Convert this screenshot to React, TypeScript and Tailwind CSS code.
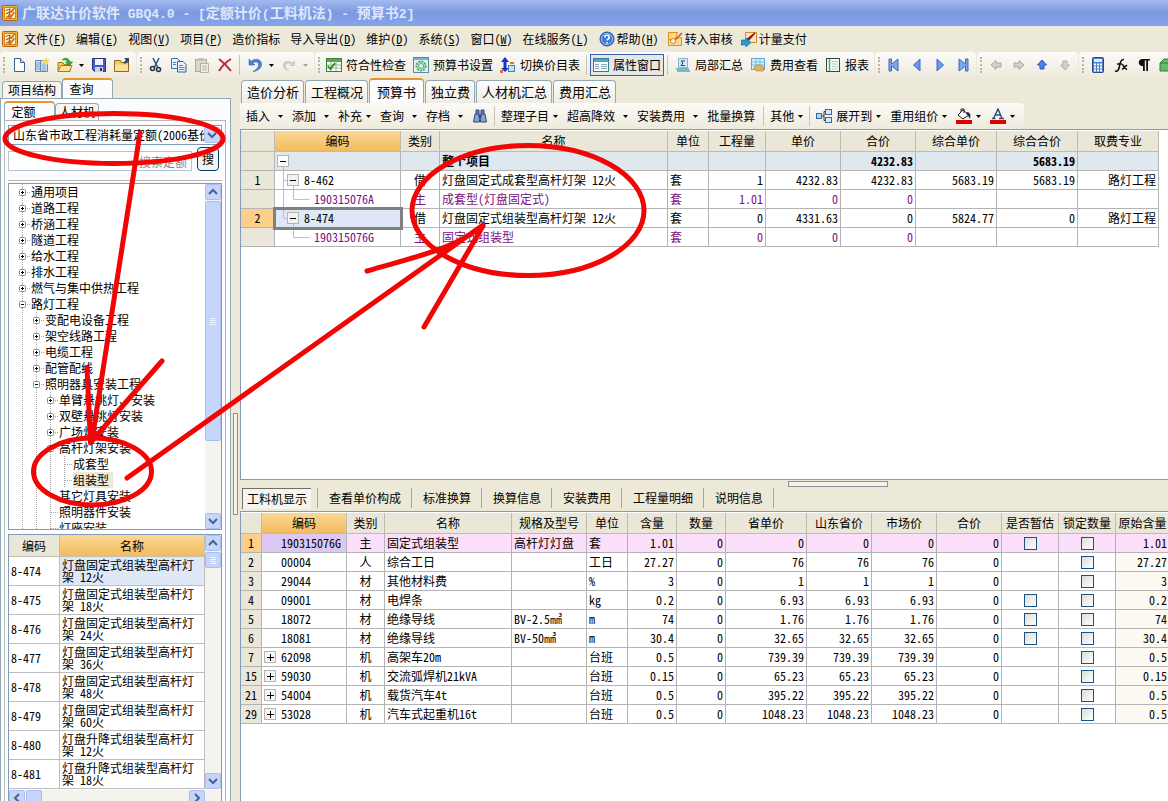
import { ReactNode } from "react";
import clsx from "clsx";

const icons: Record<string, ReactNode> = {
  app: (
    <>
      <rect x="0.5" y="0.5" width="15" height="15" rx="1" fill="#f3b33a" stroke="#b5650f" />
      <rect x="2.5" y="2.5" width="11" height="11" fill="#fff3cf" stroke="#d98618" />
      <path d="M3.500 5.500L8 4M4 9l4-2.500M4 12.500l5-3M8 3.500L7 13M12.500 3L9 7l3 1-4 5" fill="none" stroke="#b8600c" strokeWidth="1.300" />
      <path d="M12 4.500l-2.500 3L12 8" fill="#f0b040" />
    </>
  ),
  newFile: (
    <>
      <path d="M3.500 1.500h6l4 4v9h-10z" fill="#fafcff" stroke="#40608c" />
      <path d="M9.500 1.500v4h4" fill="#c9daf2" stroke="#40608c" />
    </>
  ),
  project: (
    <>
      <path d="M1.500 3.500h5v11h-5zM6.500 3.500h7v11h-7z" fill="#cfe2f8" stroke="#5f86b5" />
      <path d="M3 5v8M5 5v8M8 7h4M8 9h4M8 11h4M8 13h4" stroke="#7ba2cf" />
      <path d="M12 0l1 2.500L16 3l-2 2 .5 3L12 6.500 9.500 8l.5-3-2-2 3-.5z" fill="#f8d65a" />
    </>
  ),
  open: (
    <>
      <path d="M1 5.500h5l1 2h6v7H1z" fill="#f5c95a" stroke="#a9781c" />
      <path d="M1 14.500l3-6h11l-2.500 6z" fill="#fde39a" stroke="#a9781c" />
      <path d="M5 3c3-3 7-2 8 2h2.500L12 9 8.500 5H11C10 3 8 2.500 5 3z" fill="#35b02d" stroke="#1d7a1a" strokeWidth="0.600" />
    </>
  ),
  save: (
    <>
      <path d="M1.500 1.500h13v13h-11l-2-2z" fill="#4a5cc0" stroke="#28327c" />
      <rect x="4" y="2" width="8" height="6" fill="#eef2fc" />
      <rect x="4" y="10" width="8" height="5" fill="#c9d2ea" />
      <rect x="9" y="11" width="2" height="3" fill="#28327c" />
    </>
  ),
  folder: (
    <>
      <path d="M0.500 3.500h6l1 2h7v9h-14z" fill="#f1c760" stroke="#8d6b20" />
      <path d="M1 7.500h13v6.500H1z" fill="#fbe09a" />
      <path d="M10 1h5v5l-1.500-1.500L11 7 9.500 5.500 12 3z" fill="#38425f" />
    </>
  ),
  cut: (
    <>
      <path d="M5 1l4.500 9M11 1L6.500 10" stroke="#33558a" strokeWidth="1.600" fill="none" />
      <circle cx="4.500" cy="11.500" r="2" fill="none" stroke="#1f2c52" strokeWidth="1.500" />
      <circle cx="10.500" cy="12.500" r="2" fill="none" stroke="#1f2c52" strokeWidth="1.500" />
    </>
  ),
  copy: (
    <>
      <path d="M0.500 1.500h6l3 3v7h-9z" fill="#eaf3fd" stroke="#3c71ad" />
      <path d="M6.500 4.500h5.500l3 3v7.500H6.500z" fill="#eaf3fd" stroke="#2b5f9f" />
      <path d="M8 8.500h4M8 10.500h5.500M8 12.500h5.500M2 5.500h3M2 7.500h3" stroke="#4b86c7" />
    </>
  ),
  paste: (
    <>
      <rect x="1.500" y="2.500" width="11" height="12" fill="#d9d6cb" stroke="#aeaa9d" />
      <rect x="4.500" y="1" width="5" height="3" fill="#c5c1b4" />
      <path d="M6.500 6.500h8v9h-8z" fill="#efeee8" stroke="#b5b1a4" />
      <path d="M8 9h5M8 11h5M8 13h5" stroke="#bdb9ad" />
    </>
  ),
  remove: <path d="M2 2c4 3 8 7 12 12M14 2C9 5 5 9 2 14" stroke="#c1253a" strokeWidth="2" fill="none" />,
  undo: <path d="M2 2v6h6L5.800 6C9 4 12 5 11.500 8.500 11 11 9 13 6 14.500 12 14 15 10 14.500 6.500 14 2 8 1 4.200 4.200z" fill="#4a80d6" stroke="#2c5cab" strokeWidth="0.500" />,
  redo: <path d="M14 3v6H8l2.200-2C7 5.500 4.500 7 5 9.500c.3 2 2 3.500 4 4.500-5 0-7.500-3-7-6.500.5-4 6-4.500 9.500-2z" fill="#d0cdc2" />,
  check: (
    <>
      <rect x="0.500" y="1.500" width="15" height="13" fill="#fff" stroke="#3f7d3a" />
      <path d="M1 2h14v3H1z" fill="#58a948" />
      <path d="M1 8h14M1 11h14M5 5v9M10 5v9" stroke="#8fb78a" />
      <path d="M2 9l2.500 3L9 6" stroke="#238a1e" strokeWidth="1.800" fill="none" />
    </>
  ),
  settings: (
    <>
      <rect x="0.500" y="0.500" width="15" height="15" fill="#e3f1f3" stroke="#568aa3" />
      <path d="M1 1h14v2H1z" fill="#7cb3d4" />
      <circle cx="8" cy="9" r="4.500" fill="none" stroke="#4ba563" strokeWidth="2" strokeDasharray="2 1" />
      <circle cx="8" cy="9" r="2.500" fill="none" stroke="#4ba563" />
    </>
  ),
  swap: (
    <>
      <path d="M5 0l4 5H6.500v6H9l-4 4-4-4h2.500V5H1z" fill="#1432d6" />
      <rect x="8.500" y="8.500" width="6" height="6" fill="#c6e1f5" stroke="#497fb0" />
      <path d="M0 13h3v3H0z" fill="#e36e3c" />
      <path d="M10 6h4" stroke="#e36e3c" strokeWidth="2" />
    </>
  ),
  props: (
    <>
      <rect x="0.500" y="1.500" width="15" height="13" fill="#f3faff" stroke="#3b7c93" />
      <path d="M1 2h14v3H1z" fill="#55a5bd" />
      <path d="M2 7.500h4M2 9.500h4M2 11.500h4M8 7.500h6M8 9.500h6M8 11.500h6" stroke="#8fa9bb" />
    </>
  ),
  sum: (
    <>
      <rect x="3.500" y="1.500" width="9" height="9" fill="#d4ecf8" stroke="#86b6cc" />
      <path d="M10 4H6l2 2-2 2.500h4" stroke="#2a4766" fill="none" />
      <path d="M1 12h13M2 14h13" stroke="#5aa7bf" strokeWidth="1.500" />
    </>
  ),
  fee: (
    <>
      <rect x="1.500" y="1.500" width="13" height="11" fill="#d8effc" stroke="#5fa7d6" />
      <path d="M2 5h12M2 8h12M6 2v10M10 2v10" stroke="#7cbbe0" />
      <path d="M5 9c3-2 8-1 9 2l-1 3H8c-3 0-5-2-3-5z" fill="#e0b25e" stroke="#a87826" strokeWidth="0.600" />
    </>
  ),
  report: (
    <>
      <rect x="1.500" y="1.500" width="13" height="13" fill="#f6fbf6" stroke="#2d4a3a" />
      <path d="M4.500 2v12" stroke="#59a46f" strokeWidth="1.500" />
      <path d="M7 4.500h6M7 7h6M7 9.500h6M7 12h6" stroke="#b6d0bf" />
    </>
  ),
  first: <path d="M3 2h2.500v5L12 2v12L5.500 9v5H3z" fill="#7ea6ef" stroke="#3b69c4" />,
  prev: <path d="M11 2v12L4.500 8z" fill="#6d97ee" stroke="#3b69c4" />,
  next: <path d="M5 2v12l6.500-6z" fill="#6d97ee" stroke="#3b69c4" />,
  last: <path d="M13 2h-2.500v5L4 2v12l6.500-5v5H13z" fill="#7ea6ef" stroke="#3b69c4" />,
  left: <path d="M3 8l5-4.500V6h5v4H8v2.500z" fill="#d2d0ca" stroke="#aaa8a2" />,
  right: <path d="M13 8L8 3.500V6H3v4h5v2.500z" fill="#d2d0ca" stroke="#aaa8a2" />,
  up: <path d="M8 3l4.500 5H10v4H6V8H3.500z" fill="#4a86ee" stroke="#2756b4" />,
  down: <path d="M8 13L3.500 8H6V4h4v4h2.500z" fill="#d2d0ca" stroke="#b2b0aa" />,
  calc: (
    <>
      <rect x="2.500" y="0.500" width="11" height="15" rx="1" fill="#4d7cc9" stroke="#274a8c" />
      <rect x="4" y="2" width="8" height="3" fill="#dcecff" />
      <path d="M4 7.500h8M4 10.500h8M4 13.500h8" stroke="#fff" strokeWidth="2" strokeDasharray="2 1" />
    </>
  ),
  fx: <path d="M2 14c3 1 4-2 4.500-5S8 2 11 2.500M4 7h5M9 8c2-1 2 5 5 4M14 8l-5 4.500" stroke="#111" strokeWidth="1.600" fill="none" />,
  para: <path d="M14 2H6.500C1.500 2 1.500 9 6.500 9H7v5h1.800V3.500h1.400V14H12V3.500h2z" fill="#111" />,
  cube: <path d="M1 6l4-4h10v9l-3 3H1zM1 6h10v8M11 6l4-4" fill="#66b969" stroke="#2f7c39" />,
  binoc: (
    <>
      <path d="M4 2h3v5H4zM9 2h3v5H9z" fill="#5c7fb8" stroke="#2b4679" />
      <path d="M3 6h4l.5 8h-6zM9 6h4l1.500 8h-6z" fill="#86a6d8" stroke="#2b4679" />
      <path d="M7 7h2v3H7z" fill="#2b4679" />
    </>
  ),
  expand: (
    <>
      <path d="M5 8h3M8 3.500v9M8 3.500h2M8 12.500h2" stroke="#333" fill="none" />
      <rect x="0.500" y="5.500" width="5" height="5" fill="#b9d3f5" stroke="#3566a8" />
      <rect x="9.500" y="1.500" width="6" height="5" fill="#dbe9fb" stroke="#3566a8" />
      <rect x="9.500" y="9.500" width="6" height="5" fill="#dbe9fb" stroke="#3566a8" />
    </>
  ),
  fill: (
    <>
      <path d="M2 7l5-5 6 5-6 4z" fill="#fff" stroke="#222" />
      <path d="M5 4V1h3v4" fill="none" stroke="#222" />
      <path d="M11 4c3 0 4 3 3 7-1-2-2-4-4-5z" fill="#20207c" />
      <path d="M0 12h16v4H0z" fill="#e00000" />
    </>
  ),
  fontColor: (
    <>
      <path d="M2 10.500h3.500M9 10.500h5M3.500 10.500L8 1l4 9.500M5.500 7h5" stroke="#2d5080" strokeWidth="1.500" fill="none" />
      <path d="M0 12h16v4H0z" fill="#e00000" />
    </>
  ),
  help: (
    <>
      <circle cx="8" cy="8" r="7" fill="#3b74d6" stroke="#2150a0" />
      <circle cx="8" cy="8" r="5.500" fill="none" stroke="#a8c8f8" />
      <path d="M5.800 6.500c0-3 4.500-3 4.500 0 0 1.500-2.200 1.500-2.200 3M8 11v1.500" stroke="#fff" strokeWidth="1.600" fill="none" />
    </>
  ),
  audit: (
    <>
      <path d="M1.500 1.500h9l-2 6 6-1v8h-13z" fill="#fbd98c" stroke="#e08e1e" />
      <path d="M3 8l3 3 9-9" stroke="#d94f1c" strokeWidth="1.500" fill="none" />
      <circle cx="6" cy="10" r="2.500" fill="#fff3d0" stroke="#cf8b27" />
    </>
  ),
  pay: (
    <>
      <path d="M4.500 1.500h11v10h-11z" fill="#fbe5c4" stroke="#d98332" />
      <path d="M14 2L7 10l-2 1 .5-2.500z" fill="#b5381c" stroke="#7c2410" strokeWidth="1.200" />
      <path d="M0 9h5v-2l5 4.500L5 16v-2H0z" fill="#2e9ac8" stroke="#16688f" strokeWidth="0.600" />
    </>
  ),
};

const Icon = ({ name }: { name: string }) => (
  <svg viewBox="0 0 16 16" className="h-4 w-4 shrink-0" aria-hidden="true">
    {icons[name]}
  </svg>
);

const Caret = ({ className }: { className?: string }) => (
  <svg viewBox="0 0 5 3" className={clsx("h-[3px] w-[5px] shrink-0", className)} aria-hidden="true">
    <path d="M0 0h5L2.500 3z" fill="currentColor" />
  </svg>
);

const Sep = ({ wide }: { wide?: boolean }) => (
  <span className={clsx("h-5 w-px shrink-0 bg-[#c9c5b2]", wide ? "mx-[6px]" : "mx-[3px]")} />
);

const Group = ({ children, className }: { children: ReactNode; className?: string }) => (
  <div
    className={clsx(
      "flex h-[26px] shrink-0 items-center rounded-sm bg-linear-to-b from-[#fbfaf7] to-[#eeebdd] pl-[3px]",
      className
    )}
  >
    <span className="mr-[2px] h-4 w-0.5 shrink-0 border-l-2 border-dotted border-[#b9b5a2]" />
    {children}
  </div>
);

const IconButton = ({ name, label }: { name: string; label: string }) => (
  <button type="button" aria-label={label} className="flex w-[23px] shrink-0 justify-center">
    <Icon name={name} />
  </button>
);

const TextButton = ({ icon, text }: { icon: string; text: string }) => (
  <button type="button" className="flex shrink-0 items-center gap-1 pr-[3px] pl-1">
    <Icon name={icon} />
    {text}
  </button>
);

const TitleBar = () => {
  const title = "广联达计价软件 GBQ4.0 - [定额计价(工料机法) - 预算书2]";
  return (
    <header className="flex h-[26px] shrink-0 items-center gap-1 bg-linear-to-b from-[#a3baf0] via-[#7b98e0] to-[#86a6ea] pl-[2px]">
      <Icon name="app" />
      <h1 className="text-[14px] font-bold whitespace-pre text-[#dfe7fb]">
        {title.split(/([ -~]+)/).map((part, n) => (
          <span key={n} className={clsx(n % 2 === 1 && "font-['Liberation_Mono',monospace] text-[13px]")}>
            {part}
          </span>
        ))}
      </h1>
    </header>
  );
};

const MenuBar = () => {
  const menus = ["文件(F)", "编辑(E)", "视图(V)", "项目(P)", "造价指标", "导入导出(D)", "维护(D)", "系统(S)", "窗口(W)", "在线服务(L)"];
  return (
    <nav className="flex h-[26px] shrink-0 items-center gap-[10px] pl-[2px]">
      <span className="-mr-1">
        <Icon name="app" />
      </span>
      {menus.map((menu) => {
        const [name, key] = menu.split(/[()]/);
        return (
          <button type="button" key={menu} className="shrink-0">
            {name}
            {key && (
              <>
                (<u>{key}</u>)
              </>
            )}
          </button>
        );
      })}
      <div className="flex shrink-0 gap-2">
        <button type="button" className="flex shrink-0 items-center gap-[2px]">
          <Icon name="help" />
          <span>
            帮助(<u>H</u>)
          </span>
        </button>
        <button type="button" className="flex shrink-0 items-center gap-[2px]">
          <Icon name="audit" />
          转入审核
        </button>
        <button type="button" className="flex shrink-0 items-center gap-[2px]">
          <Icon name="pay" />
          计量支付
        </button>
      </div>
    </nav>
  );
};

const MainToolbar = () => (
  <div className="flex h-[26px] shrink-0 gap-px overflow-hidden">
    <Group className="w-[136px]">
      <IconButton name="newFile" label="新建" />
      <IconButton name="project" label="新建项目" />
      <IconButton name="open" label="打开" />
      <Caret className="mx-[3px]" />
      <IconButton name="save" label="保存" />
      <IconButton name="folder" label="关闭" />
    </Group>
    <Group className="w-[177px]">
      <IconButton name="cut" label="剪切" />
      <IconButton name="copy" label="复制" />
      <IconButton name="paste" label="粘贴" />
      <IconButton name="remove" label="删除" />
      <Sep />
      <IconButton name="undo" label="撤销" />
      <Caret className="mx-[3px]" />
      <IconButton name="redo" label="恢复" />
      <Caret className="mx-[3px] text-[#aaa698]" />
    </Group>
    <Group className="w-[559px]">
      <TextButton icon="check" text="符合性检查" />
      <TextButton icon="settings" text="预算书设置" />
      <TextButton icon="swap" text="切换价目表" />
      <Sep />
      <button
        type="button"
        className="flex h-[22px] shrink-0 items-center gap-1 border border-[#3a5ea8] bg-[#e4e6ea] px-[2px]"
      >
        <Icon name="props" />
        属性窗口
      </button>
      <Sep />
      <TextButton icon="sum" text="局部汇总" />
      <TextButton icon="fee" text="费用查看" />
      <TextButton icon="report" text="报表" />
    </Group>
    <Group className="w-[101px]">
      <IconButton name="first" label="首条" />
      <IconButton name="prev" label="上一条" />
      <IconButton name="next" label="下一条" />
      <IconButton name="last" label="末条" />
    </Group>
    <Group className="w-[101px]">
      <IconButton name="left" label="左移" />
      <IconButton name="right" label="右移" />
      <IconButton name="up" label="上移" />
      <IconButton name="down" label="下移" />
    </Group>
    <Group className="grow">
      <IconButton name="calc" label="计算器" />
      <IconButton name="fx" label="函数" />
      <IconButton name="para" label="段落" />
      <IconButton name="cube" label="模型" />
    </Group>
  </div>
);

const ScrollButton = ({ d, label }: { d: string; label: string }) => (
  <button
    type="button"
    aria-label={label}
    className="flex h-4 w-4 shrink-0 items-center justify-center rounded-xs border border-[#a9bdf0] bg-[#c6d5fc]"
  >
    <svg viewBox="0 0 10 10" className="h-[10px] w-[10px]" aria-hidden="true">
      <path d={d} fill="none" stroke="#44628f" strokeWidth="2" />
    </svg>
  </button>
);

const UP = "M1 7l4-4 4 4";
const DOWN = "M1 3l4 4 4-4";

const VerticalScroll = ({ thumb }: { thumb: string }) => (
  <div className="flex w-4 shrink-0 flex-col bg-[#f4f3ee]">
    <ScrollButton d={UP} label="向上滚动" />
    <div
      className={clsx(
        "mt-px flex w-4 flex-col items-center justify-center gap-px rounded-xs border border-[#a9bdf0] bg-[#c6d5fc]",
        thumb
      )}
    >
      {[0, 1, 2, 3].map((n) => (
        <span key={n} className="h-px w-[6px] bg-[#eef4fe]" />
      ))}
    </div>
    <div className="mt-auto">
      <ScrollButton d={DOWN} label="向下滚动" />
    </div>
  </div>
);

type TreeRow = { level: number; text: string; mark?: "+" | "-"; selected?: boolean };

const tree: TreeRow[] = [
  { level: 0, text: "通用项目", mark: "+" },
  { level: 0, text: "道路工程", mark: "+" },
  { level: 0, text: "桥涵工程", mark: "+" },
  { level: 0, text: "隧道工程", mark: "+" },
  { level: 0, text: "给水工程", mark: "+" },
  { level: 0, text: "排水工程", mark: "+" },
  { level: 0, text: "燃气与集中供热工程", mark: "+" },
  { level: 0, text: "路灯工程", mark: "-" },
  { level: 1, text: "变配电设备工程", mark: "+" },
  { level: 1, text: "架空线路工程", mark: "+" },
  { level: 1, text: "电缆工程", mark: "+" },
  { level: 1, text: "配管配线", mark: "+" },
  { level: 1, text: "照明器具安装工程", mark: "-" },
  { level: 2, text: "单臂悬挑灯、安装", mark: "+" },
  { level: 2, text: "双壁悬挑灯安装", mark: "+" },
  { level: 2, text: "广场灯安装", mark: "+" },
  { level: 2, text: "高杆灯架安装", mark: "-" },
  { level: 3, text: "成套型" },
  { level: 3, text: "组装型", selected: true },
  { level: 2, text: "其它灯具安装" },
  { level: 2, text: "照明器件安装" },
  { level: 2, text: "灯座安装" },
];

const TreeMark = ({ mark }: { mark?: "+" | "-" }) => (
  <svg viewBox="0 0 14 16" className="h-4 w-[14px] shrink-0" aria-hidden="true">
    <path d="M5.500 0v16M6 8.500h8" stroke="#a5a5a5" strokeDasharray="1 1" />
    {mark && (
      <>
        <rect x="2.500" y="5.500" width="6" height="6" rx="1" fill="#fff" stroke="#7b8fa8" />
        <path d={mark === "+" ? "M4 8.500h3M5.500 7v3" : "M4 8.500h3"} stroke="#000" />
      </>
    )}
  </svg>
);

const quotas = [
  ["8-474", "灯盘固定式组装型高杆灯架 12火"],
  ["8-475", "灯盘固定式组装型高杆灯架 18火"],
  ["8-476", "灯盘固定式组装型高杆灯架 24火"],
  ["8-477", "灯盘固定式组装型高杆灯架 36火"],
  ["8-478", "灯盘固定式组装型高杆灯架 48火"],
  ["8-479", "灯盘固定式组装型高杆灯架 60火"],
  ["8-480", "灯盘升降式组装型高杆灯架 12火"],
  ["8-481", "灯盘升降式组装型高杆灯架 18火"],
];

const SidePanel = () => (
  <aside className="flex w-[231px] shrink-0 flex-col">
    <div className="flex h-5 shrink-0 items-end pl-[2px]">
      <button type="button" className="h-[17px] rounded-t-sm border border-b-0 border-[#91a7b4] bg-[#f6f5ef] px-[5px] leading-4">
        项目结构
      </button>
      <button
        type="button"
        className="h-5 w-[51px] rounded-t-sm border border-t-2 border-b-0 border-[#91a7b4] border-t-[#e5972d] bg-[#fcfcfe] pr-3 leading-4"
      >
        查询
      </button>
    </div>
    <div className="flex min-h-0 grow flex-col border border-b-0 border-[#91a7b4] bg-[#fcfcfe] pt-[2px] pr-1 pl-[3px]">
      <div className="flex h-[19px] shrink-0 items-end">
        <button
          type="button"
          className="h-[19px] w-[51px] rounded-t-sm border border-t-2 border-b-0 border-[#91a7b4] border-t-[#e5972d] pr-3 leading-4"
        >
          定额
        </button>
        <button type="button" className="h-[17px] rounded-t-sm border border-b-0 border-[#91a7b4] bg-[#f6f5ef] px-[3px] leading-4">
          人材机
        </button>
      </div>
      <div className="flex min-h-0 grow flex-col border border-b-0 border-[#b5b9b4] px-[3px] pt-1">
        <div className="flex h-5 shrink-0 items-center border border-[#7f9db9] bg-white pr-px">
          <select
            aria-label="定额库"
            className="min-w-0 grow appearance-none overflow-hidden pl-1 leading-4 text-clip whitespace-nowrap"
          >
            <option>山东省市政工程消耗量定额(2006基价)</option>
          </select>
          <ScrollButton d={DOWN} label="展开定额库" />
        </div>
        <div className="mt-[2px] flex shrink-0 items-end gap-[5px] border-b border-[#b5b9b4] pb-[9px]">
          <input
            aria-label="搜索定额"
            placeholder="搜索定额"
            className="h-5 w-0 grow border border-[#b5c5d2] bg-white pr-1 text-right leading-4 placeholder:text-[#8a8a8a]"
          />
          <button type="button" className="mr-[3px] h-6 w-[22px] rounded-sm border border-[#003c74] bg-[#f4f3ee]">
            搜
          </button>
        </div>
        <div className="mt-[2px] flex h-[347px] shrink-0 border border-[#7f9db9] bg-white">
          <ul className="min-w-0 grow overflow-hidden pl-2">
            {tree.map((row) => (
              <li key={row.text} className="flex h-4 leading-4 whitespace-nowrap">
                {Array.from({ length: row.level }, (_, n) => (
                  <svg key={n} viewBox="0 0 14 16" className="h-4 w-[14px] shrink-0" aria-hidden="true">
                    <path d="M5.500 0v16" stroke="#a5a5a5" strokeDasharray="1 1" />
                  </svg>
                ))}
                <TreeMark mark={row.mark} />
                <span className={clsx(row.selected && "bg-[#ece9d8] pr-1")}>{row.text}</span>
              </li>
            ))}
          </ul>
          <VerticalScroll thumb="h-[240px]" />
        </div>
        <div className="mt-1 flex min-h-0 grow flex-col overflow-hidden border border-b-0 border-[#7f9db9] bg-white">
          <div className="flex">
            <table className="grow table-fixed border-separate border-spacing-0">
              <thead>
                <tr>
                  <th className="h-[22px] w-[51px] border-r border-b border-[#c4c0b0] bg-[#ebe7d8] font-normal">编码</th>
                  <th className="border-r border-b border-[#c4c0b0] bg-linear-to-b from-[#fbd794] to-[#f3bb5e] font-normal">名称</th>
                </tr>
              </thead>
              <tbody>
                {quotas.map(([code, name], index) => (
                  <tr key={code}>
                    <td className="h-[29px] border-r border-b border-[#bdbdbd] pl-[2px]">{code}</td>
                    <td
                      className={clsx(
                        "border-r border-b border-[#bdbdbd] pl-[2px] leading-3",
                        index === 0 && "bg-[#dfe8f6]"
                      )}
                    >
                      {name}
                    </td>
                  </tr>
                ))}
              </tbody>
            </table>
            <VerticalScroll thumb="h-4" />
          </div>
          <div className="mt-px flex h-4 shrink-0 bg-[#f4f3ee]">
            <ScrollButton d="M7 1L3 5l4 4" label="向左滚动" />
            <div className="ml-px h-4 w-4 rounded-xs border border-[#a9bdf0] bg-[#c6d5fc]" />
            <div className="mr-4 ml-auto">
              <ScrollButton d="M3 1l4 4-4 4" label="向右滚动" />
            </div>
          </div>
        </div>
      </div>
    </div>
  </aside>
);

const pageTabs = ["造价分析", "工程概况", "预算书", "独立费", "人材机汇总", "费用汇总"];

const PageTabs = () => (
  <div className="flex h-[25px] shrink-0 items-end gap-px pl-px text-[13px]">
    {pageTabs.map((tab) => (
      <button
        type="button"
        key={tab}
        className={clsx(
          "shrink-0 rounded-t-sm border border-b-0 border-[#91a7b4]",
          tab === "预算书"
            ? "h-[25px] border-t-2 border-t-[#e5972d] bg-[#fcfcfe] px-[7px]"
            : "h-[23px] bg-linear-to-b from-[#fdfdfb] to-[#efede2] pr-1 pl-[5px]"
        )}
      >
        {tab}
      </button>
    ))}
  </div>
);

type DropButtonProps = { text?: string; tight?: boolean; last?: boolean; icon?: string; label?: string };

const DropButton = ({ text, tight, last, icon, label }: DropButtonProps) => (
  <button type="button" aria-label={label} className="flex shrink-0 items-center">
    {icon && <Icon name={icon} />}
    {icon && text && <span className="w-1" />}
    {text}
    <Caret className={clsx(tight ? "ml-1" : "ml-2", !last && "mr-[9px]")} />
  </button>
);

const EditToolbar = () => (
  <div className="flex shrink-0">
    <div className="flex h-[26px] items-center rounded-r-sm bg-linear-to-b from-[#fbfaf7] to-[#eeebdd] pl-[6px]">
      <DropButton text="插入" />
      <DropButton text="添加" />
      <DropButton text="补充" tight />
      <DropButton text="查询" />
      <DropButton text="存档" />
      <button type="button" aria-label="查找">
        <Icon name="binoc" />
      </button>
      <Sep wide />
      <DropButton text="整理子目" tight />
      <DropButton text="超高降效" />
      <DropButton text="安装费用" />
      <button type="button" className="mr-[2px] shrink-0">
        批量换算
      </button>
      <Sep wide />
      <DropButton text="其他" tight last />
      <Sep wide />
      <DropButton icon="expand" text="展开到" tight />
      <DropButton text="重用组价" tight />
      <DropButton icon="fill" label="填充颜色" tight />
      <DropButton icon="fontColor" label="字体颜色" tight />
    </div>
  </div>
);

const headCell = "h-[21px] border-r border-b border-[#c0bcab] bg-[#ebe7d8] p-0 font-normal whitespace-nowrap";
const activeHead = "bg-linear-to-b from-[#fbd794] to-[#f3bb5e]";
const bodyCell = "h-[19px] overflow-hidden border-r border-b border-[#b4b4b4] px-[2px] py-0 leading-[14px] whitespace-nowrap";

const budgetColumns = [
  { title: "", width: "w-[34px]" },
  { title: "编码", width: "w-[126px]" },
  { title: "类别", width: "w-[39px]" },
  { title: "名称", width: "w-[228px]" },
  { title: "单位", width: "w-[41px]" },
  { title: "工程量", width: "w-[57px]" },
  { title: "单价", width: "w-[75px]" },
  { title: "合价", width: "w-[75px]" },
  { title: "综合单价", width: "w-[81px]" },
  { title: "综合合价", width: "w-[81px]" },
  { title: "取费专业", width: "w-[81px]" },
];

const budgetRows = [
  { kind: "total", cells: ["", "", "", "整个项目", "", "", "", "4232.83", "", "5683.19", ""] },
  { kind: "item", cells: ["1", "8-462", "借", "灯盘固定式成套型高杆灯架 12火", "套", "1", "4232.83", "4232.83", "5683.19", "5683.19", "路灯工程"] },
  { kind: "sub", cells: ["", "190315076A", "主", "成套型(灯盘固定式)", "套", "1.01", "0", "0", "", "", ""] },
  { kind: "active", cells: ["2", "8-474", "借", "灯盘固定式组装型高杆灯架 12火", "套", "0", "4331.63", "0", "5824.77", "0", "路灯工程"] },
  { kind: "sub", cells: ["", "190315076G", "主", "固定式组装型", "套", "0", "0", "0", "", "", ""] },
];

const BranchMark = ({ kind, last }: { kind: string; last: boolean }) => (
  <svg
    viewBox={kind === "sub" ? "0 0 39 18" : "0 0 29 18"}
    className={clsx("h-[18px] shrink-0", kind === "sub" ? "w-[39px]" : "w-[29px]")}
    aria-hidden="true"
  >
    {kind === "total" && (
      <>
        <rect x="2.500" y="3.500" width="11" height="11" fill="#fff" stroke="#b5b5b5" />
        <path d="M5 9.500h6" stroke="#000" />
        <path d="M8.500 15v3" stroke="#c0c0c0" />
      </>
    )}
    {(kind === "item" || kind === "active") && (
      <>
        <path d={kind === "item" ? "M8.500 0v18M9 9.500h5M18.500 15v3" : "M8.500 0v9.500h5M18.500 15v3"} fill="none" stroke="#c0c0c0" />
        <rect x="12.500" y="3.500" width="11" height="11" fill="#f2f2f2" stroke="#b5b5b5" />
        <path d="M15 9.500h6" stroke="#000" />
      </>
    )}
    {kind === "sub" && (
      <path d={last ? "M18.500 0v9.500h16" : "M8.500 0v18M18.500 0v9.500h16"} fill="none" stroke="#c0c0c0" />
    )}
  </svg>
);

const BudgetTable = () => (
  <table className="w-[918px] table-fixed border-separate border-spacing-0">
    <thead>
      <tr>
        {budgetColumns.map((column) => (
          <th key={column.title} className={clsx(headCell, column.width, column.title === "编码" && activeHead)}>
            {column.title}
          </th>
        ))}
      </tr>
    </thead>
    <tbody>
      {budgetRows.map((row, index) => (
        <tr
          key={index}
          className={clsx(row.kind === "total" && "bg-[#dfe7ef] font-bold", row.kind === "sub" && "text-[#7b1083]")}
        >
          {row.cells.map((cell, n) => (
            <td
              key={n}
              className={clsx(
                bodyCell,
                n === 0 && (row.kind === "active" ? "bg-[#fcd08a] text-center" : "bg-[#ebe7d8] text-center"),
                n === 2 && "text-center",
                n > 4 && "text-right",
                n === 1 && "pl-0",
                n === 1 && row.kind === "active" && "relative bg-[#dfe8f6] outline-3 -outline-offset-1 outline-[#7f8083]"
              )}
            >
              {n === 1 ? (
                <span className="flex h-[18px] items-center">
                  <BranchMark kind={row.kind} last={index === budgetRows.length - 1} />
                  {cell}
                </span>
              ) : (
                cell
              )}
            </td>
          ))}
        </tr>
      ))}
    </tbody>
  </table>
);

const detailTabs = ["查看单价构成", "标准换算", "换算信息", "安装费用", "工程量明细", "说明信息"];

const detailColumns = [
  { title: "", width: "w-[21px]" },
  { title: "编码", width: "w-[85px]" },
  { title: "类别", width: "w-[38px]" },
  { title: "名称", width: "w-[127px]" },
  { title: "规格及型号", width: "w-[75px]" },
  { title: "单位", width: "w-[41px]" },
  { title: "含量", width: "w-[49px]" },
  { title: "数量", width: "w-[49px]" },
  { title: "省单价", width: "w-[81px]" },
  { title: "山东省价", width: "w-[65px]" },
  { title: "市场价", width: "w-[65px]" },
  { title: "合价", width: "w-[65px]" },
  { title: "是否暂估", width: "w-[57px]" },
  { title: "锁定数量", width: "w-[57px]" },
  { title: "原始含量", width: "w-[54px]" },
];

type DetailRow = {
  no: string;
  code: string;
  type: string;
  name: string;
  spec?: string;
  unit: string;
  amount: string;
  price: string;
  estimate?: boolean;
};

const detailRows: DetailRow[] = [
  { no: "1", code: "190315076G", type: "主", name: "固定式组装型", spec: "高杆灯灯盘", unit: "套", amount: "1.01", price: "0", estimate: true },
  { no: "2", code: "00004", type: "人", name: "综合工日", unit: "工日", amount: "27.27", price: "76" },
  { no: "3", code: "29044", type: "材", name: "其他材料费", unit: "%", amount: "3", price: "1" },
  { no: "4", code: "09001", type: "材", name: "电焊条", unit: "kg", amount: "0.2", price: "6.93", estimate: true },
  { no: "5", code: "18072", type: "材", name: "绝缘导线", spec: "BV-2.5㎣", unit: "m", amount: "74", price: "1.76", estimate: true },
  { no: "6", code: "18081", type: "材", name: "绝缘导线", spec: "BV-50㎣", unit: "m", amount: "30.4", price: "32.65", estimate: true },
  { no: "7", code: "62098", type: "机", name: "高架车20m", unit: "台班", amount: "0.5", price: "739.39" },
  { no: "15", code: "59030", type: "机", name: "交流弧焊机21kVA", unit: "台班", amount: "0.15", price: "65.23" },
  { no: "21", code: "54004", type: "机", name: "载货汽车4t", unit: "台班", amount: "0.5", price: "395.22" },
  { no: "29", code: "53028", type: "机", name: "汽车式起重机16t", unit: "台班", amount: "0.5", price: "1048.23" },
];

const Tick = ({ label }: { label: string }) => (
  <input
    type="checkbox"
    aria-label={label}
    className="mx-auto block h-[13px] w-[13px] appearance-none border border-[#1c5180] bg-linear-to-br from-[#dcdcd7] to-white"
  />
);

const DetailTable = () => (
  <table className="w-[929px] table-fixed border-separate border-spacing-0">
    <thead>
      <tr>
        {detailColumns.map((column) => (
          <th key={column.title} className={clsx(headCell, column.width, column.title === "编码" && activeHead)}>
            {column.title}
          </th>
        ))}
      </tr>
    </thead>
    <tbody>
      {detailRows.map((row, index) => (
        <tr key={row.no} className={clsx(index === 0 && "bg-[#fbdffb]")}>
          <td className={clsx(bodyCell, "px-0 text-center", index === 0 ? "bg-[#fcd08a]" : "bg-[#ebe7d8]")}>{row.no}</td>
          <td className={clsx(bodyCell, index === 0 && "bg-[#dcc9f3]")}>
            <span className="flex items-center">
              <span className="flex w-[17px] shrink-0">
                {row.type === "机" && (
                  <button type="button" aria-label={`展开 ${row.code}`} className="h-3 w-3 border border-[#b5b5b5] bg-[#f5f5f5]">
                    <svg viewBox="0 0 10 10" className="h-[10px] w-[10px]" aria-hidden="true">
                      <path d="M2 5.500h7M5.500 2v7" stroke="#000" />
                    </svg>
                  </button>
                )}
              </span>
              {row.code}
            </span>
          </td>
          <td className={clsx(bodyCell, "text-center")}>{row.type}</td>
          <td className={bodyCell}>{row.name}</td>
          <td className={bodyCell}>{row.spec}</td>
          <td className={bodyCell}>{row.unit}</td>
          <td className={clsx(bodyCell, "text-right")}>{row.amount}</td>
          <td className={clsx(bodyCell, "text-right")}>0</td>
          <td className={clsx(bodyCell, "text-right")}>{row.price}</td>
          <td className={clsx(bodyCell, "text-right")}>{row.price}</td>
          <td className={clsx(bodyCell, "text-right")}>{row.price}</td>
          <td className={clsx(bodyCell, "text-right")}>0</td>
          <td className={bodyCell}>{row.estimate && <Tick label={`是否暂估 ${row.code}`} />}</td>
          <td className={bodyCell}>
            <Tick label={`锁定数量 ${row.code}`} />
          </td>
          <td className={clsx(bodyCell, "text-right", index > 0 && "bg-[#fdfaf3]")}>{row.amount}</td>
        </tr>
      ))}
    </tbody>
  </table>
);

const Annotations = () => (
  <svg
    className="pointer-events-none absolute top-0 left-0 h-[801px] w-[1168px]"
    viewBox="0 0 1168 801"
    fill="none"
    stroke="#f20505"
    strokeWidth="5"
    strokeLinecap="round"
    aria-hidden="true"
  >
    <ellipse cx="114" cy="138.500" rx="109" ry="25" />
    <path d="M140 133L92 440M87 368l3.500 75M162 361L91 442" />
    <ellipse cx="92.500" cy="471.500" rx="59" ry="33.500" />
    <path d="M127 478L483 225M367 271c40-12 90-22 116-46M424 327l59-101" />
    <ellipse cx="528" cy="210.500" rx="116" ry="65" />
  </svg>
);

const App = () => {
  return (
    <div className="relative flex h-screen flex-col overflow-hidden bg-[#ece9d8] font-['Noto_Sans_Mono_CJK_SC','Noto_Sans_CJK_SC',monospace] text-[12px] leading-4 text-black">
      <TitleBar />
      <MenuBar />
      <MainToolbar />
      <div className="flex min-h-0 grow">
        <SidePanel />
        <div className="flex w-[9px] shrink-0 items-center justify-center pt-12">
          <span className="h-[102px] w-[5px] border border-[#8f9093] bg-[#f4f2ea]" />
        </div>
        <main className="flex min-w-0 grow flex-col overflow-hidden">
          <PageTabs />
          <EditToolbar />
          <section className="min-h-0 grow border-y border-l border-[#7f9db9] bg-white pt-px">
            <BudgetTable />
          </section>
          <div className="h-2 shrink-0 pt-px pl-[59%]">
            <div className="h-[6px] w-[100px] border border-[#8f9093] bg-[#f4f2ea]" />
          </div>
          <div className="flex h-[23px] shrink-0 items-start pl-[2px]">
            <button
              type="button"
              className="h-[21px] shrink-0 border-t border-l border-[#716f64] bg-[#f6f4ec] px-1"
            >
              工料机显示
            </button>
            <span className="ml-[6px] h-5 w-px bg-[#aca899]" />
            {detailTabs.map((tab) => (
              <button type="button" key={tab} className="h-5 shrink-0 border-r border-[#aca899] pr-[10px] pl-[11px]">
                {tab}
              </button>
            ))}
          </div>
          <section className="h-[290px] shrink-0 border-t border-l border-[#7f9db9] bg-white pt-px">
            <DetailTable />
          </section>
        </main>
      </div>
      <Annotations />
    </div>
  );
};

export default App;
